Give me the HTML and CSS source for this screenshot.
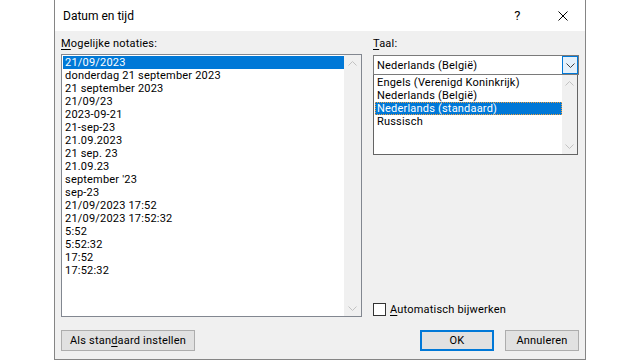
FILE: index.html
```html
<!DOCTYPE html>
<html lang="nl">
<head>
    <meta charset="UTF-8">
    <meta name="viewport" content="width=device-width, initial-scale=1.0">
    <title>Datum en tijd</title>
    <link rel="stylesheet" href="styles.css">
</head>
<body>
    <div class="dialog">
        <div class="titlebar">
            <span class="title">Datum en tijd</span>
            <span class="tb-btn">?</span>
            <span class="tb-btn">
                <svg width="10" height="10" viewBox="0 0 10 10"><path d="M0.5 0.5L9.5 9.5M9.5 0.5L0.5 9.5" stroke="#000" stroke-width="1" fill="none"/></svg>
            </span>
        </div>

        <div class="content">
            <div class="columns">
                <div class="col-left">
                    <div class="lbl"><u>M</u>ogelijke notaties:</div>
                    <div class="listbox">
                        <ul class="items">
                            <li class="selected">21/09/2023</li>
                            <li>donderdag 21 september 2023</li>
                            <li>21 september 2023</li>
                            <li>21/09/23</li>
                            <li>2023-09-21</li>
                            <li>21-sep-23</li>
                            <li>21.09.2023</li>
                            <li>21 sep. 23</li>
                            <li>21.09.23</li>
                            <li>september '23</li>
                            <li>sep-23</li>
                            <li>21/09/2023 17:52</li>
                            <li>21/09/2023 17:52:32</li>
                            <li>5:52</li>
                            <li>5:52:32</li>
                            <li>17:52</li>
                            <li>17:52:32</li>
                        </ul>
                        <div class="vscroll">
                            <span class="arrow"><svg width="9" height="5" viewBox="0 0 9 5"><path d="M0.5 4.5L4.5 0.5L8.5 4.5" stroke="#c2c2c2" fill="none"/></svg></span>
                            <span class="arrow"><svg width="9" height="5" viewBox="0 0 9 5"><path d="M0.5 0.5L4.5 4.5L8.5 0.5" stroke="#c2c2c2" fill="none"/></svg></span>
                        </div>
                    </div>
                </div>

                <div class="col-right">
                    <div class="lbl"><u>T</u>aal:</div>
                    <div class="combo">
                        <span class="combo-text">Nederlands (België)</span>
                        <span class="combo-btn">
                            <svg width="9" height="5" viewBox="0 0 9 5"><path d="M0.5 0.5L4.5 4.5L8.5 0.5" stroke="#404040" fill="none"/></svg>
                        </span>
                    </div>
                    <div class="droplist">
                        <ul class="items">
                            <li>Engels (Verenigd Koninkrijk)</li>
                            <li>Nederlands (België)</li>
                            <li class="selected focused">Nederlands (standaard)</li>
                            <li>Russisch</li>
                        </ul>
                        <div class="vscroll small">
                            <span class="arrow"><svg width="9" height="5" viewBox="0 0 9 5"><path d="M0.5 4.5L4.5 0.5L8.5 4.5" stroke="#c2c2c2" fill="none"/></svg></span>
                            <span class="arrow"><svg width="9" height="5" viewBox="0 0 9 5"><path d="M0.5 0.5L4.5 4.5L8.5 0.5" stroke="#c2c2c2" fill="none"/></svg></span>
                        </div>
                    </div>
                    <label class="check">
                        <span class="box"></span>
                        <span><u>A</u>utomatisch bijwerken</span>
                    </label>
                </div>
            </div>

            <div class="footer">
                <button class="btn wide">Als stan<u>d</u>aard instellen</button>
                <span class="spacer"></span>
                <button class="btn default">OK</button>
                <button class="btn">Annuleren</button>
            </div>
        </div>
    </div>
</body>
</html>
```

FILE: styles.css
```css
body {
    margin: 0;
    background: #fff;
    font-family: Roboto, "Noto Sans", sans-serif;
    font-size: 11px;
    letter-spacing: 0.2px;
    color: #000;
    display: flex;
    justify-content: center;
}
u {
    text-decoration: underline;
    text-underline-offset: 2px;
}
.dialog {
    width: 532px;
    height: 360px;
    box-sizing: border-box;
    border: 1px solid #858585;
    border-top: none;
    background: #f0f0f0;
    display: flex;
    flex-direction: column;
}
.titlebar {
    height: 31px;
    background: #fff;
    display: flex;
    align-items: center;
    padding-left: 8px;
}
.title {
    flex: 1;
    font-size: 12px;
    letter-spacing: 0;
}
.tb-btn {
    width: 45px;
    height: 31px;
    display: flex;
    align-items: center;
    justify-content: center;
    font-size: 13px;
}
.content {
    flex: 1;
    padding: 5px 6px 8px 6px;
    display: flex;
    flex-direction: column;
}
.columns {
    height: 281px;
    display: flex;
    gap: 11px;
}
.col-left {
    width: 301px;
    display: flex;
    flex-direction: column;
}
.col-right {
    width: 206px;
    display: flex;
    flex-direction: column;
}
.lbl {
    height: 16px;
    line-height: 16px;
    margin-bottom: 2px;
}
.listbox {
    height: 263px;
    box-sizing: border-box;
    border: 1px solid #828790;
    background: #fff;
    display: flex;
}
.items {
    flex: 1;
    list-style: none;
    margin: 0;
    padding: 1px 0 0 1px;
}
.items li {
    height: 13px;
    line-height: 13px;
    padding-left: 2px;
    white-space: nowrap;
}
.items li.selected {
    background: #0078d7;
    color: #fff;
}
.items li.focused {
    box-sizing: border-box;
    border: 1px dotted #f0a040;
    padding-left: 1px;
    line-height: 11px;
}
.vscroll {
    width: 17px;
    background: #f0f0f0;
    display: flex;
    flex-direction: column;
    justify-content: space-between;
}
.vscroll.small {
    width: 15px;
}
.arrow {
    height: 16px;
    display: flex;
    align-items: center;
    justify-content: center;
}
.combo {
    margin-top: 1px;
    height: 20px;
    box-sizing: border-box;
    border: 1px solid #7a7a7a;
    background: #fff;
    display: flex;
    align-items: center;
}
.combo-text {
    flex: 1;
    padding-left: 3px;
}
.combo-btn {
    width: 16px;
    height: 18px;
    box-sizing: border-box;
    border: 1px solid #0078d7;
    background: #e5f1fb;
    display: flex;
    align-items: center;
    justify-content: center;
}
.droplist {
    width: 205px;
    height: 80px;
    box-sizing: border-box;
    border: 1px solid #646464;
    border-top: none;
    background: #fff;
    display: flex;
}
.check {
    margin-top: auto;
    height: 16px;
    display: flex;
    align-items: center;
    gap: 4px;
}
.box {
    width: 13px;
    height: 13px;
    box-sizing: border-box;
    border: 1px solid #333;
    background: #fff;
}
.footer {
    margin-top: 13px;
    display: flex;
    gap: 11px;
}
.spacer {
    flex: 1;
}
.btn {
    height: 21px;
    width: 74px;
    padding: 0;
    border: 1px solid #adadad;
    background: #e1e1e1;
    font-family: inherit;
    font-size: 11px;
    letter-spacing: 0.2px;
    color: #000;
}
.btn.wide {
    width: 134px;
}
.btn.default {
    border: 2px solid #0078d7;
}
```
